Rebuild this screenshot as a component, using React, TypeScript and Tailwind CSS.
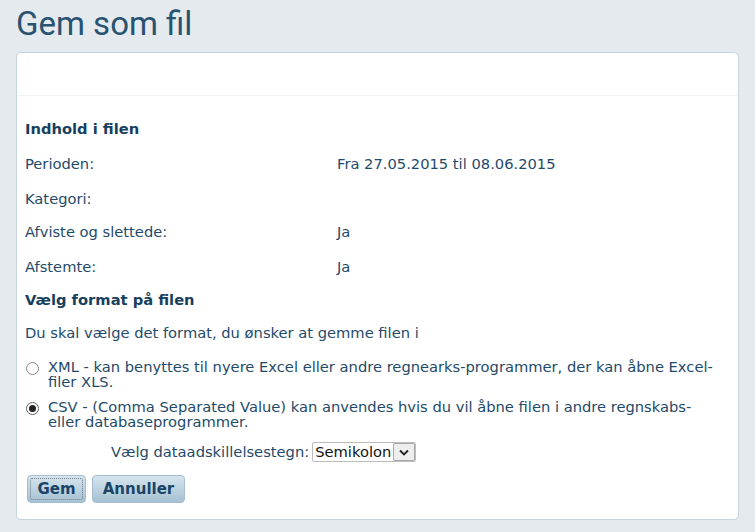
export default function App() {
    return (
        <div className="min-h-[532px] w-full bg-[#e4eaed] px-4 pb-3 font-['DejaVu_Sans',Verdana,sans-serif] text-[#1f4a6a]">
            <h1 className="flex h-[52px] items-center pb-[6px] font-['Roboto',sans-serif] text-[33px] leading-none text-[#285371]">
                Gem som fil
            </h1>

            <div className="rounded-[5px] border border-[#c6d4dc] bg-white">
                <div className="h-[43px] border-b border-[#f1f4f6]"></div>

                <div className="px-2 pt-[15px] text-[14.7px] leading-[18px]">
                    <h2 className="flex h-[35px] items-center font-bold text-[#173f5e]">Indhold i filen</h2>
                    <dl className="grid grid-cols-[312px_1fr]">
                        <dt className="flex h-[36px] items-center">Perioden:</dt>
                        <dd className="flex h-[36px] items-center">Fra 27.05.2015 til 08.06.2015</dd>
                        <dt className="flex h-[33px] items-center">Kategori:</dt>
                        <dd className="flex h-[33px] items-center"></dd>
                        <dt className="flex h-[34px] items-center">Afviste og slettede:</dt>
                        <dd className="flex h-[34px] items-center">Ja</dd>
                        <dt className="flex h-[35px] items-center">Afstemte:</dt>
                        <dd className="flex h-[35px] items-center">Ja</dd>
                    </dl>

                    <h2 className="flex h-[32px] items-center font-bold text-[#173f5e]">Vælg format på filen</h2>
                    <p className="flex h-[33px] items-center">Du skal vælge det format, du ønsker at gemme filen i</p>

                    <div className="mt-[10px] flex flex-col gap-[10px] leading-[15px]">
                        <label className="flex items-start gap-[9px] pl-[1px]">
                            <span className="mt-[3px] h-[13px] w-[13px] shrink-0 rounded-full border border-[#8a8a8a] bg-white"></span>
                            <span className="pr-[4px]">
                                XML - kan benyttes til nyere Excel eller andre regnearks-programmer, der kan åbne Excel-filer XLS.
                            </span>
                        </label>
                        <label className="flex items-start gap-[9px] pl-[1px]">
                            <span className="mt-[3px] flex h-[13px] w-[13px] shrink-0 items-center justify-center rounded-full border border-[#5f5f5f] bg-white">
                                <span className="h-[7px] w-[7px] rounded-full bg-[#222]"></span>
                            </span>
                            <span className="pr-[4px]">
                                CSV - (Comma Separated Value) kan anvendes hvis du vil åbne filen i andre regnskabs- eller databaseprogrammer.
                            </span>
                        </label>
                    </div>

                    <div className="mt-[13px] flex items-center gap-[3px] pl-[86px]">
                        <span>Vælg dataadskillelsestegn:</span>
                        <div className="flex h-[20px] items-center rounded-[2px] border border-[#bcbcbc] bg-white pl-[2px] text-[14.7px] text-[#111]">
                            <span className="pr-[2px]">Semikolon</span>
                            <span className="flex h-[18px] w-[22px] items-center justify-center rounded-[2px] border border-[#a8a8a8] bg-[#eeeeee]">
                                <svg width="10" height="7" viewBox="0 0 10 7" fill="none" stroke="#222" strokeWidth="1.8">
                                    <path d="M1 1.5 5 5.5 9 1.5" />
                                </svg>
                            </span>
                        </div>
                    </div>

                    <div className="flex gap-[6px] pt-[13px] pb-[16px] pl-[2px]">
                        <button className="relative h-[28px] w-[59px] rounded-[4px] border border-[#a3bfcf] bg-gradient-to-b from-[#d6e5ee] to-[#a5c1d3] text-[15px] font-bold text-[#1a4466]">
                            <span className="absolute inset-[2px] rounded-[2px] border border-dotted border-[#6f7f88]"></span>
                            Gem
                        </button>
                        <button className="h-[28px] w-[93px] rounded-[4px] border border-[#a3bfcf] bg-gradient-to-b from-[#d6e5ee] to-[#a5c1d3] text-[15px] font-bold text-[#1a4466]">
                            Annuller
                        </button>
                    </div>
                </div>
            </div>
        </div>
    );
}
